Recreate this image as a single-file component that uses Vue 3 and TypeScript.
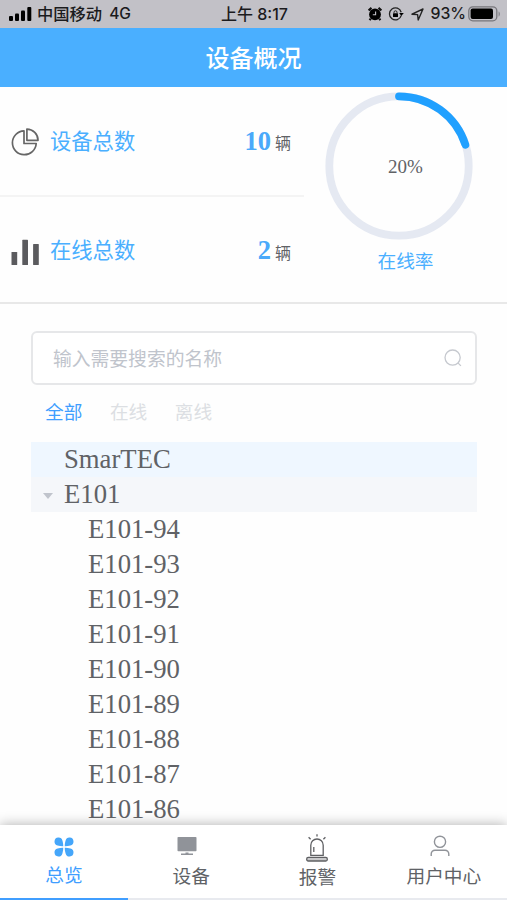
<script setup lang="ts">
import { computed, ref } from 'vue'

type Filter = '全部' | '在线' | '离线'
type TabKey = 'overview' | 'device' | 'alarm' | 'user'

const total = ref<number>(10)
const online = ref<number>(2)
const rate = computed<number>(() => Math.round((online.value / total.value) * 100))

const radius = 69.7
const circumference = 2 * Math.PI * radius
const dash = computed<string>(() => `${(circumference * rate.value) / 100} ${circumference}`)

const keyword = ref<string>('')
const filters: Filter[] = ['全部', '在线', '离线']
const activeFilter = ref<Filter>('全部')

const children: string[] = [94, 93, 92, 91, 90, 89, 88, 87, 86].map((n) => `E101-${n}`)

const tabs: { key: TabKey; label: string }[] = [
  { key: 'overview', label: '总览' },
  { key: 'device', label: '设备' },
  { key: 'alarm', label: '报警' },
  { key: 'user', label: '用户中心' },
]
const activeTab = ref<TabKey>('overview')
</script>

<template>
  <div class="screen">
    <div class="status">
      <div class="status-left">
        <svg class="signal" width="23" height="14" viewBox="0 0 23 14">
          <rect x="0" y="9" width="4" height="5" rx="1" />
          <rect x="6" y="6.5" width="4" height="7.5" rx="1" />
          <rect x="12" y="3.5" width="4" height="10.5" rx="1" />
          <rect x="18.3" y="0" width="4" height="14" rx="1" />
        </svg>
        <span class="carrier">中国移动</span>
        <span class="network">4G</span>
      </div>
      <span class="clock">上午 8:17</span>
      <div class="status-right">
        <svg class="alarm-clock" width="14" height="14" viewBox="0 0 14 14">
          <circle cx="7" cy="7.4" r="5.9" />
          <path d="M.6 3.4 3.5.9M13.4 3.4 10.5.9M2.8 11.6 1.6 13.2M11.2 11.6l1.2 1.6" stroke="#111" stroke-width="2.2" />
          <path d="M7.6 4.4v3.4H4.8" fill="none" stroke="#c2c1c7" stroke-width="1.1" />
        </svg>
        <svg class="rotation" width="16" height="14" viewBox="0 0 16 14">
          <path d="M13.2 8.6A6 6 0 1 1 13.2 5.2" fill="none" stroke="#222" stroke-width="1.3" />
          <path d="M11.2 6.1h4.6L13.3 9z" />
          <rect x="5" y="6.3" width="5" height="3.7" rx=".5" />
          <path d="M6 6.5V5.3a1.5 1.5 0 0 1 3 0v1.2" fill="none" stroke="#222" stroke-width="1" />
        </svg>
        <svg class="location" width="13" height="13" viewBox="0 0 13 13">
          <path d="M1 6.2 12 1 7.2 12 6.6 6.6z" fill="none" stroke="#222" stroke-width="1.4" stroke-linejoin="round" />
        </svg>
        <span class="percent">93%</span>
        <svg class="battery" width="33" height="16" viewBox="0 0 33 16">
          <rect x=".8" y=".8" width="28" height="14" rx="4" fill="none" stroke="#77767b" stroke-width="1.3" />
          <rect x="2.6" y="2.6" width="22.4" height="10.4" rx="2" />
          <path d="M30.5 5.5c2 .6 2 4.4 0 5z" fill="#8b8a90" />
        </svg>
      </div>
    </div>

    <header class="header">设备概况</header>

    <section class="summary">
      <div class="counts">
        <div class="count">
          <svg class="count-icon" width="28" height="28" viewBox="0 0 28 28" fill="none" stroke="#666" stroke-width="1.7" stroke-linejoin="round">
            <path d="M13 2.9A11.9 11.9 0 1 0 25.2 15.5H13z" />
            <path d="M15.9 1.1V12.3H27A11.2 11.2 0 0 0 15.9 1.1z" />
          </svg>
          <span class="count-label">设备总数</span>
          <span class="count-value">{{ total }}</span>
          <span class="count-unit">辆</span>
        </div>
        <div class="count">
          <svg class="count-icon" width="28" height="28" viewBox="0 0 28 28" fill="#5b5b5e">
            <rect x=".5" y="14" width="5.7" height="13" rx=".6" />
            <rect x="11.3" y="1.8" width="5.7" height="25.2" rx=".6" />
            <rect x="22.1" y="6" width="5.7" height="21" rx=".6" />
          </svg>
          <span class="count-label">在线总数</span>
          <span class="count-value">{{ online }}</span>
          <span class="count-unit">辆</span>
        </div>
      </div>
      <div class="rate">
        <div class="ring">
          <svg width="148" height="148" viewBox="0 0 148 148" fill="none" stroke-width="7.8">
            <circle cx="74" cy="74" :r="radius" stroke="#e5e9f2" />
            <circle cx="74" cy="74" :r="radius" stroke="#20a0ff" stroke-linecap="round" :stroke-dasharray="dash" transform="rotate(-90 74 74)" />
          </svg>
          <span class="ring-text">{{ rate }}%</span>
        </div>
        <span class="rate-label">在线率</span>
      </div>
    </section>

    <section class="list">
      <label class="search">
        <input v-model="keyword" type="text" placeholder="输入需要搜索的名称" />
        <svg width="18" height="18" viewBox="0 0 18 18" fill="none" stroke="#c6c9cf" stroke-width="1.3">
          <circle cx="8.6" cy="8.6" r="7.6" />
          <path d="m13.9 13.9 3 3" />
        </svg>
      </label>

      <div class="filters">
        <span
          v-for="item in filters"
          :key="item"
          class="filter"
          :class="{ active: item === activeFilter }"
          @click="activeFilter = item"
        >{{ item }}</span>
      </div>

      <div class="tree">
        <div class="node current">SmarTEC</div>
        <div class="node hovered"><i class="caret"></i>E101</div>
        <div v-for="name in children" :key="name" class="node child">{{ name }}</div>
      </div>
    </section>

    <nav class="tabbar">
      <div
        v-for="tab in tabs"
        :key="tab.key"
        class="tab"
        :class="[tab.key, { active: tab.key === activeTab }]"
        @click="activeTab = tab.key"
      >
        <svg v-if="tab.key === 'overview'" width="20" height="20" viewBox="0 0 20 20" fill="#45a6fa">
          <path d="M9.2 9.2C7.6 9.3 5.6 9 3.6 8.4A4 4 0 1 1 8.4 3.6C9 5.6 9.3 7.6 9.2 9.2z" />
          <path d="M10.8 9.2C12.4 9.3 14.4 9 16.4 8.4A4 4 0 1 0 11.6 3.6C11 5.6 10.7 7.6 10.8 9.2z" />
          <path d="M9.2 10.8C7.6 10.7 5.6 11 3.6 11.6A4 4 0 1 0 8.4 16.4C9 14.4 9.3 12.4 9.2 10.8z" />
          <path d="M10.8 10.8C12.4 10.7 14.4 11 16.4 11.6A4 4 0 1 1 11.6 16.4C11 14.4 10.7 12.4 10.8 10.8z" />
        </svg>
        <svg v-else-if="tab.key === 'device'" width="20" height="20" viewBox="0 0 20 20" fill="#909399">
          <rect x=".5" y="1" width="19" height="14.3" rx=".8" />
          <path d="M8.5 16.6h3v1h4.5v1.3H4v-1.3h4.5z" />
        </svg>
        <svg v-else-if="tab.key === 'alarm'" width="22" height="28" viewBox="0 0 22 28" fill="none" stroke="#5f6063" stroke-width="1.3">
          <path d="M4.8 21.4V11.2a6.2 6.2 0 0 1 12.4 0V21.4z" />
          <path d="M7.8 13v5M11 .2v2.4M2.6 3.2l2 2M19.4 3.2l-2 2" />
          <rect x=".7" y="23.4" width="20.6" height="3.6" rx="1.5" fill="#c9c9cb" />
        </svg>
        <svg v-else width="20" height="22" viewBox="0 0 20 22" fill="none" stroke="#909399" stroke-width="1.4">
          <circle cx="10" cy="6.8" r="5.6" />
          <path d="M1.2 21v-2a3.8 3.8 0 0 1 3.8-3.8h10a3.8 3.8 0 0 1 3.8 3.8v2" />
        </svg>
        <span class="tab-label">{{ tab.label }}</span>
      </div>
    </nav>
  </div>
</template>

<style>
body {
  margin: 0;
  background: #fefefe;
}
</style>

<style scoped>
.screen {
  box-sizing: border-box;
  display: flex;
  flex-direction: column;
  width: 507px;
  height: 900px;
  overflow: hidden;
  background: #fefefe;
  color: #606266;
  font-family: 'Liberation Serif', 'Noto Sans CJK SC', serif;
}

.status {
  display: grid;
  grid-template-columns: 1fr auto 1fr;
  align-items: center;
  flex: none;
  height: 28px;
  padding: 0 6px 0 8px;
  background: #c2c1c7;
  color: #1b1b1d;
  font: 500 16px/28px Inter, 'Noto Sans CJK SC', sans-serif;
}

.status-left,
.status-right {
  display: flex;
  align-items: center;
}

.status-right {
  justify-content: flex-end;
}

.signal {
  margin-left: 1px;
}

.carrier {
  margin-left: 5px;
  font-size: 16.3px;
}

.network {
  margin-left: 7px;
  font-size: 15.6px;
}

.clock {
  font-size: 16px;
}

.rotation {
  margin-left: 6px;
}

.location {
  margin-left: 7px;
}

.percent {
  margin-left: 6px;
  font-size: 15.8px;
}

.battery {
  margin-left: 2px;
}

.header {
  flex: none;
  height: 59px;
  background: #4aafff;
  color: #fff;
  font: 500 24px/58px 'Noto Sans CJK SC', sans-serif;
  text-align: center;
}

.summary {
  display: flex;
  flex: none;
  box-sizing: border-box;
  height: 217px;
  border-bottom: 2px solid #e8e8e8;
}

.counts {
  width: 304px;
}

.count {
  display: flex;
  align-items: center;
  box-sizing: border-box;
  height: 109px;
  padding: 0 13px 0 11px;
}

.count:first-child {
  height: 110px;
  border-bottom: 2px solid #f4f4f4;
}

.count:last-child {
  height: 107px;
}

.count-icon {
  margin-top: 3px;
}

.count:first-child .count-icon {
  margin-top: 2px;
}

.count-label {
  flex: 1;
  margin-left: 11px;
  color: #4aafff;
  font-size: 21.3px;
  line-height: 32px;
}

.count:first-child .count-label {
  margin-top: 1px;
}

.count-value {
  color: #4aa9fa;
  font-size: 26.5px;
  font-weight: 700;
  line-height: 32px;
}

.count:last-child .count-value {
  margin-bottom: 1px;
}

.count-unit {
  margin: 6px 0 0 4px;
  font-size: 16px;
  line-height: 24px;
}

.rate {
  display: flex;
  flex: 1;
  flex-direction: column;
  align-items: center;
  padding-top: 5px;
}

.ring {
  display: grid;
  place-items: center;
  margin-right: 13px;
}

.ring > * {
  grid-area: 1 / 1;
}

.ring-text {
  padding: 1px 0 0 13px;
  font-size: 19px;
}

.rate-label {
  margin-top: 8px;
  color: #4aafff;
  font-size: 18.7px;
  line-height: 28px;
}

.list {
  flex: 1;
  min-height: 0;
  padding: 27px 30px 0 31px;
  overflow: hidden;
}

.search {
  display: flex;
  align-items: center;
  box-sizing: border-box;
  height: 54px;
  padding: 0 13px 0 20px;
  border: 2px solid #e6e7e9;
  border-radius: 6px;
  background: #fff;
}

.search input {
  flex: 1;
  min-width: 0;
  padding: 0;
  border: 0;
  outline: 0;
  background: none;
  color: #606266;
  font: 18.8px/28px 'Noto Sans CJK SC', sans-serif;
}

.search input::placeholder {
  color: #c0c4cc;
  opacity: 1;
}

.filters {
  display: flex;
  gap: 27.5px;
  box-sizing: border-box;
  height: 57px;
  padding: 14px 14px 0;
}

.filter {
  color: #dcdfe3;
  font-size: 18.7px;
  line-height: 28px;
}

.filter.active {
  color: #409eff;
}

.node {
  display: flex;
  align-items: center;
  height: 35.05px;
  padding-left: 33px;
  font-size: 26.7px;
  line-height: 35px;
}

.node.current {
  background: #eff7ff;
}

.node.hovered {
  padding-left: 12px;
  background: #f5f7fa;
}

.node.child {
  padding-left: 57px;
}

.caret {
  width: 0;
  margin: 2px 11px 0 0;
  border: 5px solid transparent;
  border-top: 6px solid #c0c4cc;
  border-bottom: 0;
}

.tabbar {
  display: grid;
  grid-template-columns: 128px repeat(3, 1fr);
  position: relative;
  flex: none;
  height: 75px;
  background: #fff;
  box-shadow: 0 0 12px rgba(0, 0, 0, 0.32);
}

.tab {
  display: flex;
  flex-direction: column;
  align-items: center;
  box-sizing: border-box;
  border-bottom: 2px solid #e8eaef;
}

.tab svg {
  flex: none;
}

.tab.overview {
  padding-top: 12px;
}

.tab.device {
  padding-top: 11px;
}

.tab.device svg {
  margin-right: 8px;
}

.tab.alarm {
  padding-top: 9px;
}

.tab.user {
  padding-top: 10px;
}

.tab.user svg {
  margin-right: 8px;
}

.tab.active {
  border-bottom-color: #409eff;
  color: #409eff;
}

.tab-label {
  font-size: 18.7px;
  line-height: 28px;
  white-space: nowrap;
}

.tab.overview .tab-label {
  margin-top: 5px;
}

.tab.device .tab-label {
  margin-top: 7px;
}

.tab.alarm .tab-label {
  margin-top: 2px;
}

.tab.user .tab-label {
  margin-top: 6px;
}
</style>
